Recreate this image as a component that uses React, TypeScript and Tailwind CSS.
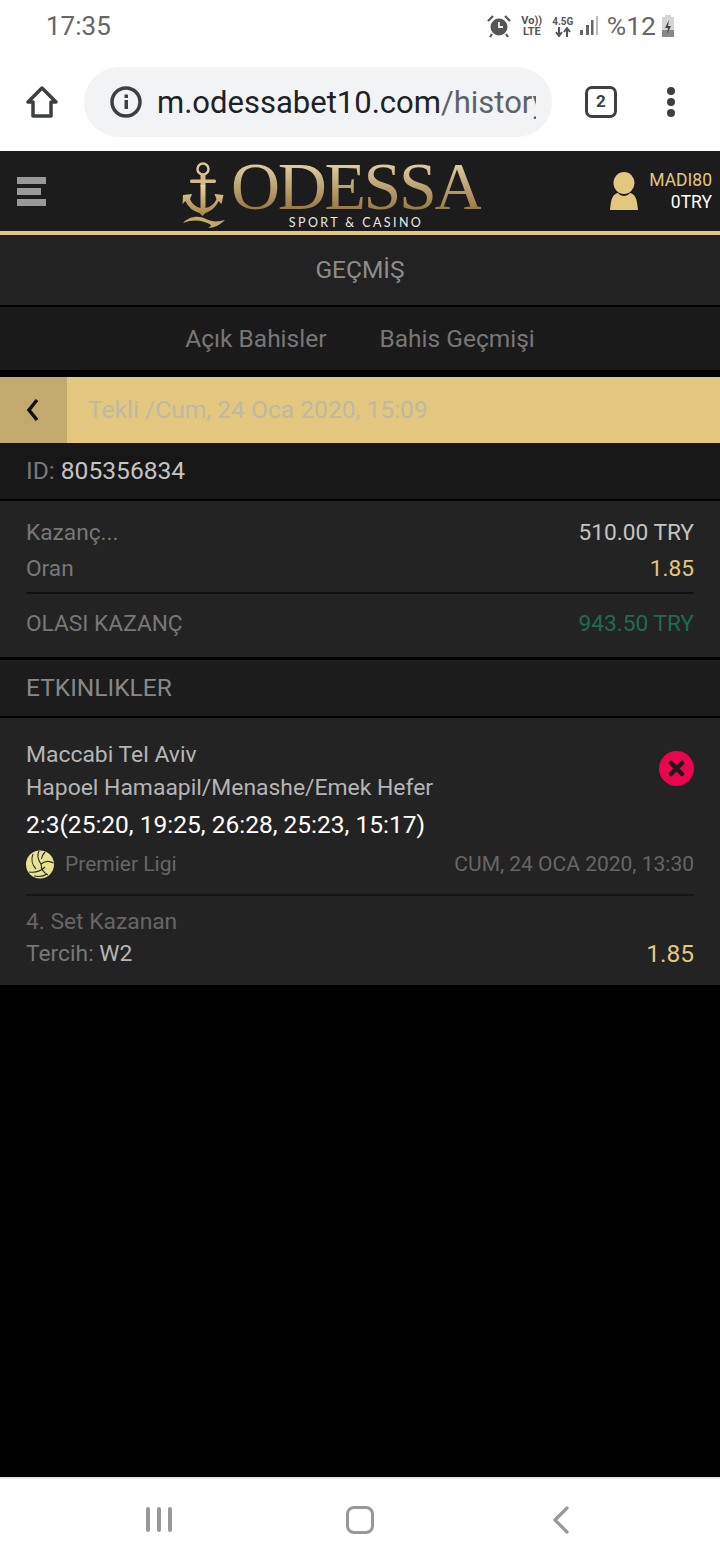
import React from 'react';

const roboto = { fontFamily: 'Roboto, sans-serif' };

const Anchor = () => (
  <svg width="46" height="68" viewBox="0 0 46 68" className="shrink-0">
    <defs>
      <linearGradient id="gold" x1="0" y1="0" x2="0" y2="1">
        <stop offset="0" stopColor="#e6d3a0" />
        <stop offset="1" stopColor="#a5823f" />
      </linearGradient>
    </defs>
    <circle cx="21" cy="8" r="5.500" fill="none" stroke="#dcc89a" strokeWidth="2.500" />
    <path d="M18.500 13h5v5.500H33a2 2 0 010 3.500h-9.500v3h-5v-3H9a2 2 0 010-3.500h9.500z" fill="#d2bb85" />
    <path d="M1 34l9-1-2 5c2 5 6 8 10.500 9V24h5v23c5-1 9-4 11-9l-2-5 9 1-2 9-3-3c-3 7-8 10-13 12l-3 3-3-3c-6-2-11-5-14-12l-3 3z" fill="url(#gold)" />
    <path d="M1 62c6-7 16-8 23-4 6 3 12 3 19 1-5 5-11 8-17 8 2-1 3-2 3-3-8-5-18-6-28-2z" fill="#c4a86a" />
  </svg>
);

const Volleyball = () => (
  <svg width="28" height="29" viewBox="0 0 28 29" className="shrink-0">
    <circle cx="14" cy="14.500" r="14" fill="#e8e391" />
    <g fill="none" stroke="#2a2a20" strokeWidth="1.100">
      <path d="M15 14C12 10 11 5 13 1" />
      <path d="M15 14c4-3 9-3 12.500-1" />
      <path d="M15 14c0 5 3 9 7 11" />
      <path d="M7 4C5 9 6 15 10 19" />
      <path d="M19 2c-2 2-3 4-3.500 7" />
      <path d="M3 22c6 1 12-1 16-5" />
      <path d="M8 26c5 1 10 0 13-2" />
    </g>
  </svg>
);

const StatusBar = () => (
  <div className="h-[52px] bg-white flex items-center justify-between pl-[46px] pr-[44px] text-[#666]" style={roboto}>
    <span className="text-[26px] leading-none">17:35</span>
    <div className="flex items-center">
      <svg width="26" height="24" viewBox="0 0 26 24">
        <circle cx="13" cy="13" r="8.500" fill="#555" />
        <path d="M13 8v5h4" stroke="#eee" strokeWidth="1.800" fill="none" />
        <path d="M2 7l5-5M24 7l-5-5M6 20l-2 3M20 20l2 3" stroke="#555" strokeWidth="2.200" />
      </svg>
      <div className="ml-[8px] w-[24px] flex flex-col items-center text-[11px] leading-[11px] font-bold text-[#555]">
        <span>Vo))</span>
        <span>LTE</span>
      </div>
      <div className="ml-[7px] w-[24px] flex flex-col items-center text-[#555]">
        <span className="text-[10px] leading-[11px] font-bold">4.5G</span>
        <svg width="18" height="10" viewBox="0 0 18 10">
          <path d="M5 0v8M2 5l3 4 3-4M13 10V2M10 5l3-4 3 4" stroke="#555" strokeWidth="2" fill="none" />
        </svg>
      </div>
      <svg width="20" height="22" viewBox="0 0 20 22" className="ml-[4px]">
        <path d="M1 15h3v5H1zM7 10h3v10H7zM12 5h2.500v15H12z" fill="#666" />
        <path d="M17 1h2v19h-2z" fill="#bbb" />
      </svg>
      <span className="ml-[8px] text-[26.5px] leading-none">%12</span>
      <svg width="16" height="24" viewBox="0 0 16 24" className="ml-[4px]">
        <path d="M5 1h6v2h3v20H2V3h3z" fill="#d5d5d5" />
        <path d="M2 16h12v7H2z" fill="#8a8a8a" />
        <path d="M9 6l-4 8h3l-1 6 4-8H8z" fill="#444" />
      </svg>
    </div>
  </div>
);

const ChromeBar = () => (
  <div className="h-[99px] bg-white flex items-center" style={roboto}>
    <div className="w-[84px] flex justify-center">
      <svg width="34" height="34" viewBox="0 0 34 34">
        <path d="M17 3L3 17h5v14h18V17h5z" fill="none" stroke="#3c4043" strokeWidth="3.500" strokeLinejoin="round" />
      </svg>
    </div>
    <div className="w-[468px] h-[70px] rounded-full bg-[#f1f3f4] flex items-center pl-[26px] overflow-hidden">
      <svg width="32" height="32" viewBox="0 0 32 32" className="shrink-0">
        <circle cx="16" cy="16" r="14" fill="none" stroke="#3c4043" strokeWidth="3.500" />
        <rect x="14.500" y="14" width="3.500" height="9" fill="#3c4043" />
        <rect x="14.500" y="8.500" width="3.500" height="3.500" fill="#3c4043" />
      </svg>
      <div className="ml-[15px] mt-[2px] w-[379px] overflow-hidden whitespace-nowrap text-[31px] leading-[36px] text-[#202124]">
        m.odessabet10.com<span className="text-[#5f6368]">/history</span>
      </div>
    </div>
    <div className="ml-[33px] mt-[1px] w-[32px] h-[32px] rounded-[7px] border-[3.5px] border-[#3c4043] flex items-center justify-center text-[17px] font-bold text-[#3c4043]">
      2
    </div>
    <div className="ml-[50px] flex flex-col gap-[3px]">
      <div className="w-[8px] h-[8px] rounded-full bg-[#3c4043]" />
      <div className="w-[8px] h-[8px] rounded-full bg-[#3c4043]" />
      <div className="w-[8px] h-[8px] rounded-full bg-[#3c4043]" />
    </div>
  </div>
);

const SiteHeader = () => (
  <div className="h-[84px] bg-[#1c1c1c] border-b-[4px] border-[#e3c77f] flex items-center relative">
    <div className="ml-[17px] w-[29px] flex flex-col gap-[4px]">
      <div className="h-[7px] bg-[#999]" />
      <div className="h-[7px] w-[24px] bg-[#999]" />
      <div className="h-[7px] bg-[#999]" />
    </div>
    <div className="ml-[136px] flex items-start mt-[8px]">
      <Anchor />
      <div className="ml-[3px] mt-[-4px] flex flex-col items-center">
        <span
          className="block text-[68px] leading-[58px] tracking-[-2.4px] bg-gradient-to-b from-[#ecdcb0] to-[#8f6f38] bg-clip-text text-transparent"
          style={{ fontFamily: '"Liberation Serif", serif' }}
        >
          ODESSA
        </span>
        <span className="text-[12.5px] leading-[14px] mt-[1px] tracking-[2.4px] text-[#e8e8e8]" style={{ fontFamily: 'Lato, sans-serif' }}>
          SPORT &amp; CASINO
        </span>
      </div>
    </div>
    <div className="ml-auto mr-[8px] flex items-center" style={roboto}>
      <svg width="28" height="38" viewBox="0 0 28 38">
        <ellipse cx="14" cy="11" rx="10.500" ry="11" fill="#e3c77f" />
        <path d="M8 21c3 4 9 4 12 0 5 1 7 5 8 17H0C1 26 3 22 8 21z" fill="#e3c77f" />
      </svg>
      <div className="ml-[11px] flex flex-col items-end text-[17.5px] leading-[22px]">
        <span className="text-[#e3c77f]">MADI80</span>
        <span className="text-white">0TRY</span>
      </div>
    </div>
  </div>
);

export default function App() {
  return (
    <div className="w-[720px] h-[1560px] bg-black flex flex-col overflow-hidden" style={roboto}>
      <StatusBar />
      <ChromeBar />
      <SiteHeader />

      <div className="h-[70px] pt-[1px] bg-[#222222] flex items-center justify-center text-[24.5px] text-[#8c8c8c]">GEÇMİŞ</div>
      <div className="h-[63px] pt-[1px] mt-[2px] bg-[#1a1a1a] flex items-center justify-center text-[24.5px] text-[#777]">
        <span>Açık Bahisler</span>
        <span className="ml-[53px]">Bahis Geçmişi</span>
      </div>

      <div className="h-[66px] mt-[7px] bg-[#e3c77f] flex items-center">
        <div className="w-[67px] h-full bg-[#c2aa6d] flex items-center justify-center">
          <svg width="14" height="24" viewBox="0 0 14 24" className="mr-[1px]">
            <path d="M11 2L3 12l8 10" fill="none" stroke="#111" strokeWidth="3.500" />
          </svg>
        </div>
        <span className="ml-[21px] text-[24.6px] text-[#bdb9a5]">Tekli /Cum, 24 Oca 2020, 15:09</span>
      </div>

      <div className="h-[56px] bg-[#171717] flex items-center px-[26px] text-[24.6px] text-[#777]">
        ID:<span className="ml-[6px] text-[#c4c4c4]">805356834</span>
      </div>

      <div className="h-[156px] mt-[2px] bg-[#232323] px-[26px] text-[22.7px]">
        <div className="h-[93px] border-b-[2px] border-[#111] pt-[14px] leading-[36px]">
          <div className="flex justify-between">
            <span className="text-[#777]">Kazanç...</span>
            <span className="text-[#c4c4c4]">510.00 TRY</span>
          </div>
          <div className="flex justify-between">
            <span className="text-[#777]">Oran</span>
            <span className="text-[#e3c77f]">1.85</span>
          </div>
        </div>
        <div className="h-[61px] flex items-center justify-between">
          <span className="text-[#777]">OLASI KAZANÇ</span>
          <span className="text-[#1f6b4c]">943.50 TRY</span>
        </div>
      </div>

      <div className="h-[56px] pt-[1px] mt-[3px] bg-[#1c1c1c] flex items-center px-[26px] text-[24.5px] text-[#888]">ETKINLIKLER</div>

      <div className="h-[267px] mt-[2px] bg-[#232323] px-[26px] pt-[20px]">
        <div className="flex justify-between">
          <div className="text-[22.9px] leading-[33px] text-[#b5b5b5]">
            <div>Maccabi Tel Aviv</div>
            <div>Hapoel Hamaapil/Menashe/Emek Hefer</div>
            <div className="text-[24.5px] leading-[42px] text-white">2:3(25:20, 19:25, 26:28, 25:23, 15:17)</div>
          </div>
          <div className="mt-[13px] w-[35px] h-[35px] rounded-full bg-[#e8064f] flex items-center justify-center">
            <svg width="17" height="17" viewBox="0 0 17 17">
              <path d="M3 3l11 11M14 3L3 14" stroke="#1c1c1c" strokeWidth="4.500" strokeLinecap="round" />
            </svg>
          </div>
        </div>
        <div className="h-[38px] mt-[-1px] pt-[1px] flex items-center text-[21px] text-[#666]">
          <Volleyball />
          <span className="ml-[11px]">Premier Ligi</span>
          <span className="ml-auto">CUM, 24 OCA 2020, 13:30</span>
        </div>
        <div className="h-[2px] mt-[11px] bg-[#151515]" />
        <div className="mt-[10px] text-[22.8px] leading-[32px] text-[#666]">4. Set Kazanan</div>
        <div className="flex items-center justify-between text-[22.8px] leading-[32px]">
          <span className="text-[#777]">
            Tercih: <span className="text-[#b5b5b5]">W2</span>
          </span>
          <span className="text-[24.5px] text-[#e3c77f]">1.85</span>
        </div>
      </div>

      <div className="flex-1" />

      <div className="h-[83px] bg-white border-t-[2px] border-[#e5e5e5] flex items-center relative">
        <div className="ml-[146px] flex gap-[7.5px]">
          <div className="w-[3.500px] h-[25px] rounded-full bg-[#999]" />
          <div className="w-[3.500px] h-[25px] rounded-full bg-[#999]" />
          <div className="w-[3.500px] h-[25px] rounded-full bg-[#999]" />
        </div>
        <div className="ml-[174px] w-[28px] h-[28px] rounded-[8px] border-[3.5px] border-[#999]" />
        <svg width="18" height="28" viewBox="0 0 18 28" className="ml-[178px]">
          <path d="M15 2L3 14l12 12" fill="none" stroke="#999" strokeWidth="3.200" strokeLinecap="round" strokeLinejoin="round" />
        </svg>
      </div>
    </div>
  );
}
